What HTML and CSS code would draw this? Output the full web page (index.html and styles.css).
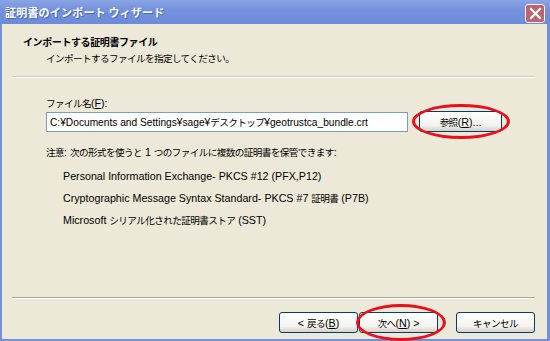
FILE: index.html
```html
<!DOCTYPE html>
<html>
<head>
<meta charset="UTF-8">
<link rel="stylesheet" href="styles.css">
</head>
<body>
  <div class="window">
    <div class="titlebar">
      <span class="title">証明書のインポート ウィザード</span>
      <span class="close">
        <svg width="13" height="13" viewBox="0 0 13 13"><path d="M2 2 L11 11 M11 2 L2 11" stroke="#fff" stroke-width="2.2" stroke-linecap="square"/></svg>
      </span>
    </div>

    <div class="header">
      <div class="head-title">インポートする証明書ファイル</div>
      <div class="head-sub">インポートするファイルを指定してください。</div>
    </div>
    <div class="rule"></div>

    <div class="content">
      <div class="label">ファイル名<span class="en">(<u>F</u>):</span></div>
      <div class="file-row">
        <div class="input"><span class="en">C:¥Documents and Settings¥sage¥</span>デスクトップ<span class="en">¥geotrustca_bundle.crt</span></div>
        <div class="btn browse">参照<span class="en">(<u>R</u>)...</span>
          <span class="mark mark-browse"></span>
        </div>
      </div>
      <div class="note">注意<span class="en">: </span>次の形式を使うと<span class="en"> 1 </span>つのファイルに複数の証明書を保管できます<span class="en">:</span></div>
      <ul class="formats">
        <li><span class="en">Personal Information Exchange- PKCS #12 (PFX,P12)</span></li>
        <li><span class="en">Cryptographic Message Syntax Standard- PKCS #7 </span>証明書<span class="en"> (P7B)</span></li>
        <li><span class="en">Microsoft </span>シリアル化された証明書ストア<span class="en"> (SST)</span></li>
      </ul>
    </div>

    <div class="rule bottom-rule"></div>
    <div class="buttons">
      <div class="btn"><span class="en">&lt; </span>戻る<span class="en">(<u>B</u>)</span></div>
      <div class="btn">次へ<span class="en">(<u>N</u>) &gt;</span>
        <span class="mark mark-next"></span>
      </div>
      <div class="btn cancel">キャンセル</div>
    </div>
  </div>
</body>
</html>
```

FILE: styles.css
```css
* {
  box-sizing: border-box;
}

body {
  margin: 0;
  font-family: "Noto Sans CJK JP", sans-serif;
  font-size: 9.6px;
  letter-spacing: -0.6px;
  color: #000;
}

.en {
  font-family: "Liberation Sans", sans-serif;
  font-size: 10.7px;
  letter-spacing: 0;
}

.input .en {
  font-size: 10.2px;
}

.window {
  width: 550px;
  height: 341px;
  background: #ece9d8;
  border-left: 2px solid #7390dc;
  border-right: 3px solid #7390dc;
  border-bottom: 2px solid #7390dc;
  display: flex;
  flex-direction: column;
}

.titlebar {
  height: 24px;
  margin: 0 -3px 0 -2px;
  background: linear-gradient(#8aa5e6, #7592dd 40%, #6e8bda);
  display: flex;
  align-items: center;
  justify-content: space-between;
  padding: 0 5px 0 5px;
}

.title {
  color: #fff;
  font-weight: bold;
  font-size: 11px;
  text-shadow: 1px 1px 0 #4a64b0;
  letter-spacing: 0.2px;
}

.close {
  width: 20px;
  height: 19px;
  margin-top: 2px;
  background: #bd6470;
  border: 1px solid #f3f3f3;
  border-radius: 3px;
  display: flex;
  align-items: center;
  justify-content: center;
}

.header {
  height: 52px;
  padding: 10px 0 0 21px;
}

.head-title {
  font-weight: bold;
  font-size: 10px;
  letter-spacing: -0.4px;
  line-height: 16px;
}

.head-sub {
  padding-left: 23px;
  line-height: 16px;
}

.rule {
  margin: 0 12px 0 10px;
  height: 2px;
  border-top: 1px solid #cfcbbd;
  border-bottom: 1px solid #fff;
}

.content {
  padding: 17px 0 0 44px;
  flex: 1;
}

.label {
  line-height: 16px;
}

.file-row {
  display: flex;
  align-items: center;
}

.input {
  width: 362px;
  height: 20px;
  background: #fff;
  border: 1px solid #7f9db9;
  padding: 0 3px;
  line-height: 18px;
  white-space: nowrap;
  overflow: hidden;
}

.btn {
  position: relative;
  width: 80px;
  height: 21px;
  border: 1px solid #003c74;
  border-radius: 3px;
  background: linear-gradient(#ffffff, #f3f3ef 70%, #d6d0c5);
  display: flex;
  align-items: center;
  justify-content: center;
  line-height: 14px;
  white-space: pre;
}

.browse {
  width: 83px;
  margin-left: 11px;
}

.note {
  margin-top: 12px;
  line-height: 16px;
}

.formats {
  list-style: none;
  margin: 8px 0 0;
  padding: 0 0 0 17px;
}

.formats li {
  margin-top: 6px;
  line-height: 16px;
}

.formats li:first-child {
  margin-top: 0;
}

.bottom-rule {
  border-top-color: #aca899;
}

.buttons {
  height: 40px;
  display: flex;
  justify-content: flex-end;
  padding: 13px 12px 0 0;
}

.buttons .btn {
  width: 79px;
}

.cancel {
  margin-left: 18px;
}

.buttons .btn + .btn:not(.cancel) {
  margin-left: 1px;
}

.mark {
  position: absolute;
  border: 3px solid #e8101a;
  border-radius: 50%;
}

.mark-browse {
  left: -8px;
  top: -8px;
  width: 98px;
  height: 35px;
}

.mark-next {
  left: -4px;
  top: -9px;
  width: 90px;
  height: 37px;
}
```
